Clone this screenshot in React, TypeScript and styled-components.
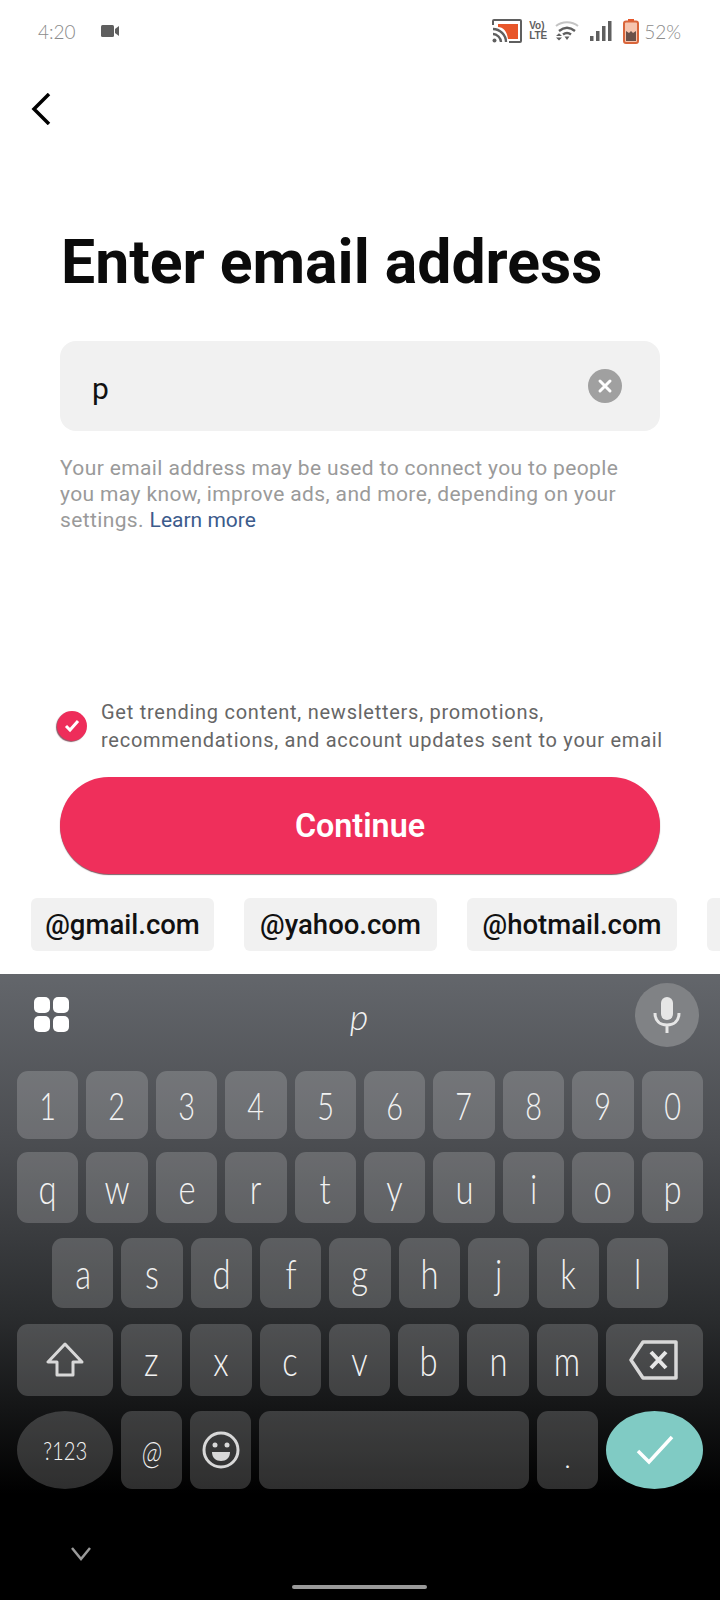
import React from 'react';
import styled, { createGlobalStyle } from 'styled-components';

const GlobalStyle = createGlobalStyle`
  html, body {
    margin: 0;
    padding: 0;
    background: #fff;
    overflow: hidden;
  }
  * {
    box-sizing: border-box;
  }
`;

const Screen = styled.div`
  width: 720px;
  height: 1600px;
  display: flex;
  flex-direction: column;
  overflow: hidden;
  font-family: Roboto, 'Liberation Sans', sans-serif;
  background: #fff;
`;

const StatusBar = styled.div`
  height: 62px;
  padding: 0 39px 0 38px;
  display: flex;
  align-items: center;
  color: #8b8b8b;
  font-family: Lato, 'Open Sans', sans-serif;
  font-weight: 300;
  font-size: 19px;
`;

const StatusLeft = styled.div`
  display: flex;
  align-items: center;
  gap: 25px;
  flex: 1;
`;

const StatusRight = styled.div`
  display: flex;
  align-items: center;
`;

const Volte = styled.div`
  width: 19px;
  margin: 0 7px;
  display: flex;
  flex-direction: column;
  color: #5f5f5f;
  font-family: 'Liberation Sans', sans-serif;
  font-size: 10px;
  font-weight: 700;
  line-height: 10px;
`;

const IconGap = styled.span<{ $w: number }>`
  width: ${(p) => p.$w}px;
`;

const Percent = styled.span`
  margin-left: 5px;
`;

const TopBar = styled.div`
  height: 64px;
  padding: 31px 0 0 31px;
`;

const Content = styled.div`
  padding: 0 60px;
`;

const Title = styled.h1`
  margin: 103px 0 0 1px;
  font-size: 60.7px;
  line-height: 68px;
  font-weight: 700;
  color: #0b0b0b;
  white-space: nowrap;
`;

const InputBox = styled.div`
  margin-top: 44px;
  height: 90px;
  padding: 0 38px 0 32px;
  display: flex;
  align-items: center;
  justify-content: space-between;
  background: #f1f1f1;
  border-radius: 16px;
`;

const InputValue = styled.span`
  margin-top: 4px;
  font-size: 30px;
  color: #111;
`;

const ClearButton = styled.span`
  width: 34px;
  height: 34px;
  border-radius: 50%;
  background: #a0a0a0;
  display: flex;
  align-items: center;
  justify-content: center;
`;

const Help = styled.p`
  margin: 24px 0 0;
  font-size: 21px;
  line-height: 26px;
  letter-spacing: 0.38px;
  color: #9a9a9a;
  white-space: nowrap;
`;

const LearnMore = styled.span`
  letter-spacing: 0;
  color: #3c5b8c;
`;

const Consent = styled.div`
  margin-top: 165px;
  padding-left: 57px;
  height: 56px;
  display: flex;
  align-items: center;
  gap: 14px;
`;

const CheckCircle = styled.span`
  width: 30px;
  height: 30px;
  flex: none;
  border-radius: 50%;
  background: #ee2d5a;
  box-shadow: -1px 1px 1px #8a5a66;
  display: flex;
  align-items: center;
  justify-content: center;
`;

const ConsentText = styled.div`
  font-size: 20px;
  line-height: 28px;
  letter-spacing: 0.74px;
  color: #666;
  white-space: nowrap;
`;

const ContinueButton = styled.div`
  margin: 23px 60px 0;
  height: 97px;
  border-radius: 49px;
  background: #ef2f5b;
  box-shadow: 0 1px 1px #7f6066;
  display: flex;
  align-items: center;
  justify-content: center;
  color: #fff;
  font-size: 32.3px;
  font-weight: 600;
`;

const ChipRow = styled.div`
  margin-top: 24px;
  padding-left: 31px;
  display: flex;
  gap: 30px;
  height: 53px;
`;

const Chip = styled.span<{ $w: number }>`
  flex: none;
  width: ${(p) => p.$w}px;
  background: #f1f1f1;
  border-radius: 6px;
  display: flex;
  align-items: center;
  justify-content: center;
  font-size: 27.5px;
  font-weight: 500;
  color: #111;
`;

const Keyboard = styled.div`
  margin-top: 23px;
  flex: 1;
  padding: 0 17px;
  display: flex;
  flex-direction: column;
  background: linear-gradient(180deg, #63666b 0%, #4b4d51 27%, #2a2c2e 55%, #000 83%);
  color: #f2f2f2;
  font-family: Lato, 'Open Sans', sans-serif;
  font-weight: 300;
`;

const Suggestions = styled.div`
  height: 97px;
  padding: 9px 4px 0 17px;
  display: flex;
  justify-content: space-between;
  align-items: flex-start;
`;

const GridIcon = styled.div`
  margin-top: 14px;
  display: grid;
  grid-template-columns: 16px 16px;
  grid-auto-rows: 16px;
  gap: 3px;
`;

const GridDot = styled.span`
  background: #fff;
  border-radius: 5px;
`;

const Suggestion = styled.span`
  margin: 13px 0 0 14px;
  font-size: 36px;
  line-height: 40px;
  font-style: italic;
`;

const MicButton = styled.span`
  width: 64px;
  height: 64px;
  border-radius: 50%;
  background: #808285;
  display: flex;
  align-items: center;
  justify-content: center;
`;

const KeyRow = styled.div<{ $cols: string; $h: number; $mt: number; $inset?: number }>`
  display: grid;
  grid-template-columns: ${(p) => p.$cols};
  column-gap: 8px;
  height: ${(p) => p.$h}px;
  margin-top: ${(p) => p.$mt}px;
  padding: 0 ${(p) => p.$inset ?? 0}px;
`;

const Key = styled.span<{ $round?: boolean; $accent?: boolean; $size?: number; $italic?: boolean }>`
  display: flex;
  align-items: center;
  justify-content: center;
  border-radius: ${(p) => (p.$round ? '50%' : '11px')};
  background: ${(p) => (p.$accent ? '#80cbc4' : 'rgba(255, 255, 255, 0.18)')};
  font-size: ${(p) => p.$size ?? 42}px;
  font-style: ${(p) => (p.$italic ? 'italic' : 'normal')};
`;

const Glyph = styled.span`
  display: inline-block;
  transform: scaleX(0.78);
`;

const PeriodGlyph = styled.span`
  padding-top: 22px;
  font-weight: 700;
`;

const KeyboardFooter = styled.div`
  flex: 1;
  position: relative;
`;

const Collapse = styled.span`
  position: absolute;
  left: 54px;
  top: 58px;
  line-height: 0;
`;

const HomeBar = styled.span`
  position: absolute;
  left: 275px;
  top: 96px;
  width: 135px;
  height: 4px;
  border-radius: 2px;
  background: #9a9a9a;
`;

function CastIcon() {
  return (
    <svg width="30" height="24" viewBox="0 0 30 24">
      <path d="M1 6V2a1 1 0 0 1 1-1h26a1 1 0 0 1 1 1v20a1 1 0 0 1-1 1H17" fill="none" stroke="#5f5f5f" strokeWidth="2" />
      <path d="M6 5h20v15H16C15 12 11 8 6 8z" fill="#e8562a" />
      <path d="M1 10c7 0 13 6 13 13M1 15c4 0 8 4 8 8" fill="none" stroke="#5f5f5f" strokeWidth="2.4" />
      <circle cx="2.5" cy="21.5" r="2" fill="#5f5f5f" />
    </svg>
  );
}

function WifiIcon() {
  return (
    <svg width="24" height="20" viewBox="0 0 24 20">
      <path d="M1 5c6-5 16-5 22 0" fill="none" stroke="#c4c4c4" strokeWidth="2" />
      <path d="M4 10c5-4 11-4 16 0M8 13.500c2.500-2 5.500-2 8 0" fill="none" stroke="#5f5f5f" strokeWidth="2.400" />
      <path d="M1 15h6l-3-2.800zM1 16.500h6l-3 3zM9.500 15.500h5l-2.500 3.500z" fill="#5f5f5f" />
    </svg>
  );
}

function SignalIcon() {
  return (
    <svg width="22" height="20" viewBox="0 0 22 20" fill="#5f5f5f">
      <rect x="0" y="15" width="3.500" height="5" />
      <rect x="6" y="10" width="3.500" height="10" />
      <rect x="12" y="5" width="3.500" height="15" />
      <rect x="18" y="0" width="3.500" height="20" />
    </svg>
  );
}

function BatteryIcon() {
  return (
    <svg width="16" height="25" viewBox="0 0 16 25">
      <rect x="5" y="0" width="6" height="3" fill="#e8562a" />
      <rect x="1" y="2.500" width="14" height="21.500" rx="2" fill="#f6c4ae" stroke="#d9653a" strokeWidth="2" />
      <path d="M3 12l3 2 2-2 2 2 3-2v10H3z" fill="#6b5048" />
    </svg>
  );
}

function ClearIcon() {
  return (
    <svg width="16" height="16" viewBox="0 0 16 16">
      <path d="M3 3l10 10M13 3L3 13" stroke="#fff" strokeWidth="3" strokeLinecap="round" />
    </svg>
  );
}

const digits = ['1', '2', '3', '4', '5', '6', '7', '8', '9', '0'];
const topLetters = ['q', 'w', 'e', 'r', 't', 'y', 'u', 'i', 'o', 'p'];
const homeLetters = ['a', 's', 'd', 'f', 'g', 'h', 'j', 'k', 'l'];
const lowLetters = ['z', 'x', 'c', 'v', 'b', 'n', 'm'];

export default function App() {
  return (
    <Screen>
      <GlobalStyle />
      <StatusBar>
        <StatusLeft>
          <span>4:20</span>
          <svg width="18" height="12" viewBox="0 0 18 12" fill="#5f5f5f">
            <rect x="0" y="0" width="13" height="12" rx="1.500" />
            <path d="M14 4l4-3v10l-4-3z" />
          </svg>
        </StatusLeft>
        <StatusRight>
          <CastIcon />
          <Volte>
            <span>Vo)</span>
            <span>LTE</span>
          </Volte>
          <WifiIcon />
          <IconGap $w={11} />
          <SignalIcon />
          <IconGap $w={11} />
          <BatteryIcon />
          <Percent>52%</Percent>
        </StatusRight>
      </StatusBar>

      <TopBar>
        <svg width="20" height="32" viewBox="0 0 20 32">
          <path d="M18 1L3 16l15 15" fill="none" stroke="#000" strokeWidth="3.500" />
        </svg>
      </TopBar>

      <Content>
        <Title>Enter email address</Title>
        <InputBox>
          <InputValue>p</InputValue>
          <ClearButton>
            <ClearIcon />
          </ClearButton>
        </InputBox>
        <Help>
          Your email address may be used to connect you to people
          <br />
          you may know, improve ads, and more, depending on your
          <br />
          settings. <LearnMore>Learn more</LearnMore>
        </Help>
      </Content>

      <Consent>
        <CheckCircle>
          <svg width="16" height="14" viewBox="0 0 16 14">
            <path d="M2 7l4 4 8-9" fill="none" stroke="#fff" strokeWidth="3" />
          </svg>
        </CheckCircle>
        <ConsentText>
          Get trending content, newsletters, promotions,
          <br />
          recommendations, and account updates sent to your email
        </ConsentText>
      </Consent>

      <ContinueButton>Continue</ContinueButton>

      <ChipRow>
        <Chip $w={183}>@gmail.com</Chip>
        <Chip $w={193}>@yahoo.com</Chip>
        <Chip $w={210}>@hotmail.com</Chip>
        <Chip $w={60} />
      </ChipRow>

      <Keyboard>
        <Suggestions>
          <GridIcon>
            <GridDot />
            <GridDot />
            <GridDot />
            <GridDot />
          </GridIcon>
          <Suggestion>p</Suggestion>
          <MicButton>
            <svg width="28" height="36" viewBox="0 0 28 36">
              <rect x="8" y="0" width="12" height="23" rx="6" fill="#e6e6e6" />
              <path d="M2 16c0 8 5 12 12 12s12-4 12-12M14 28v8" fill="none" stroke="#e6e6e6" strokeWidth="3" />
            </svg>
          </MicButton>
        </Suggestions>

        <KeyRow $cols="repeat(10, 1fr)" $h={68} $mt={0}>
          {digits.map((d) => (
            <Key key={d} $size={37}>
              <Glyph>{d}</Glyph>
            </Key>
          ))}
        </KeyRow>
        <KeyRow $cols="repeat(10, 1fr)" $h={71} $mt={13}>
          {topLetters.map((l) => (
            <Key key={l}>
              <Glyph>{l}</Glyph>
            </Key>
          ))}
        </KeyRow>
        <KeyRow $cols="repeat(9, 1fr)" $h={70} $mt={15} $inset={35}>
          {homeLetters.map((l) => (
            <Key key={l}>
              <Glyph>{l}</Glyph>
            </Key>
          ))}
        </KeyRow>
        <KeyRow $cols="96px repeat(7, 1fr) 97px" $h={72} $mt={16}>
          <Key>
            <svg width="38" height="36" viewBox="0 0 38 36">
              <path d="M19 2L2 20h9v13h16V20h9z" fill="none" stroke="#d8d8d8" strokeWidth="3" strokeLinejoin="round" />
            </svg>
          </Key>
          {lowLetters.map((l) => (
            <Key key={l}>
              <Glyph>{l}</Glyph>
            </Key>
          ))}
          <Key>
            <svg width="50" height="40" viewBox="0 0 50 40">
              <path d="M14 2h33v36H14L2 20z" fill="none" stroke="#d8d8d8" strokeWidth="3.500" strokeLinejoin="round" />
              <path d="M22 12l15 16M37 12L22 28" stroke="#e6e6e6" strokeWidth="4" />
            </svg>
          </Key>
        </KeyRow>
        <KeyRow $cols="96px 61px 61px 1fr 61px 97px" $h={78} $mt={15}>
          <Key $round $size={26}>
            <Glyph>?123</Glyph>
          </Key>
          <Key $size={34} $italic>
            <Glyph>@</Glyph>
          </Key>
          <Key>
            <svg width="38" height="38" viewBox="0 0 38 38">
              <circle cx="19" cy="19" r="17" fill="none" stroke="#d8d8d8" strokeWidth="3" />
              <circle cx="13" cy="14" r="2.500" fill="#d8d8d8" />
              <circle cx="25" cy="14" r="2.500" fill="#d8d8d8" />
              <path d="M10 21h18c0 6-4 9-9 9s-9-3-9-9z" fill="#d8d8d8" />
            </svg>
          </Key>
          <Key />
          <Key $size={17}>
            <PeriodGlyph>.</PeriodGlyph>
          </Key>
          <Key $round $accent>
            <svg width="38" height="30" viewBox="0 0 38 30">
              <path d="M2 16l11 11L36 2" fill="none" stroke="#fff" strokeWidth="3.500" />
            </svg>
          </Key>
        </KeyRow>

        <KeyboardFooter>
          <Collapse>
            <svg width="20" height="14" viewBox="0 0 20 14">
              <path d="M1 1l9 11 9-11" fill="none" stroke="#9a9a9a" strokeWidth="2.500" />
            </svg>
          </Collapse>
          <HomeBar />
        </KeyboardFooter>
      </Keyboard>
    </Screen>
  );
}
